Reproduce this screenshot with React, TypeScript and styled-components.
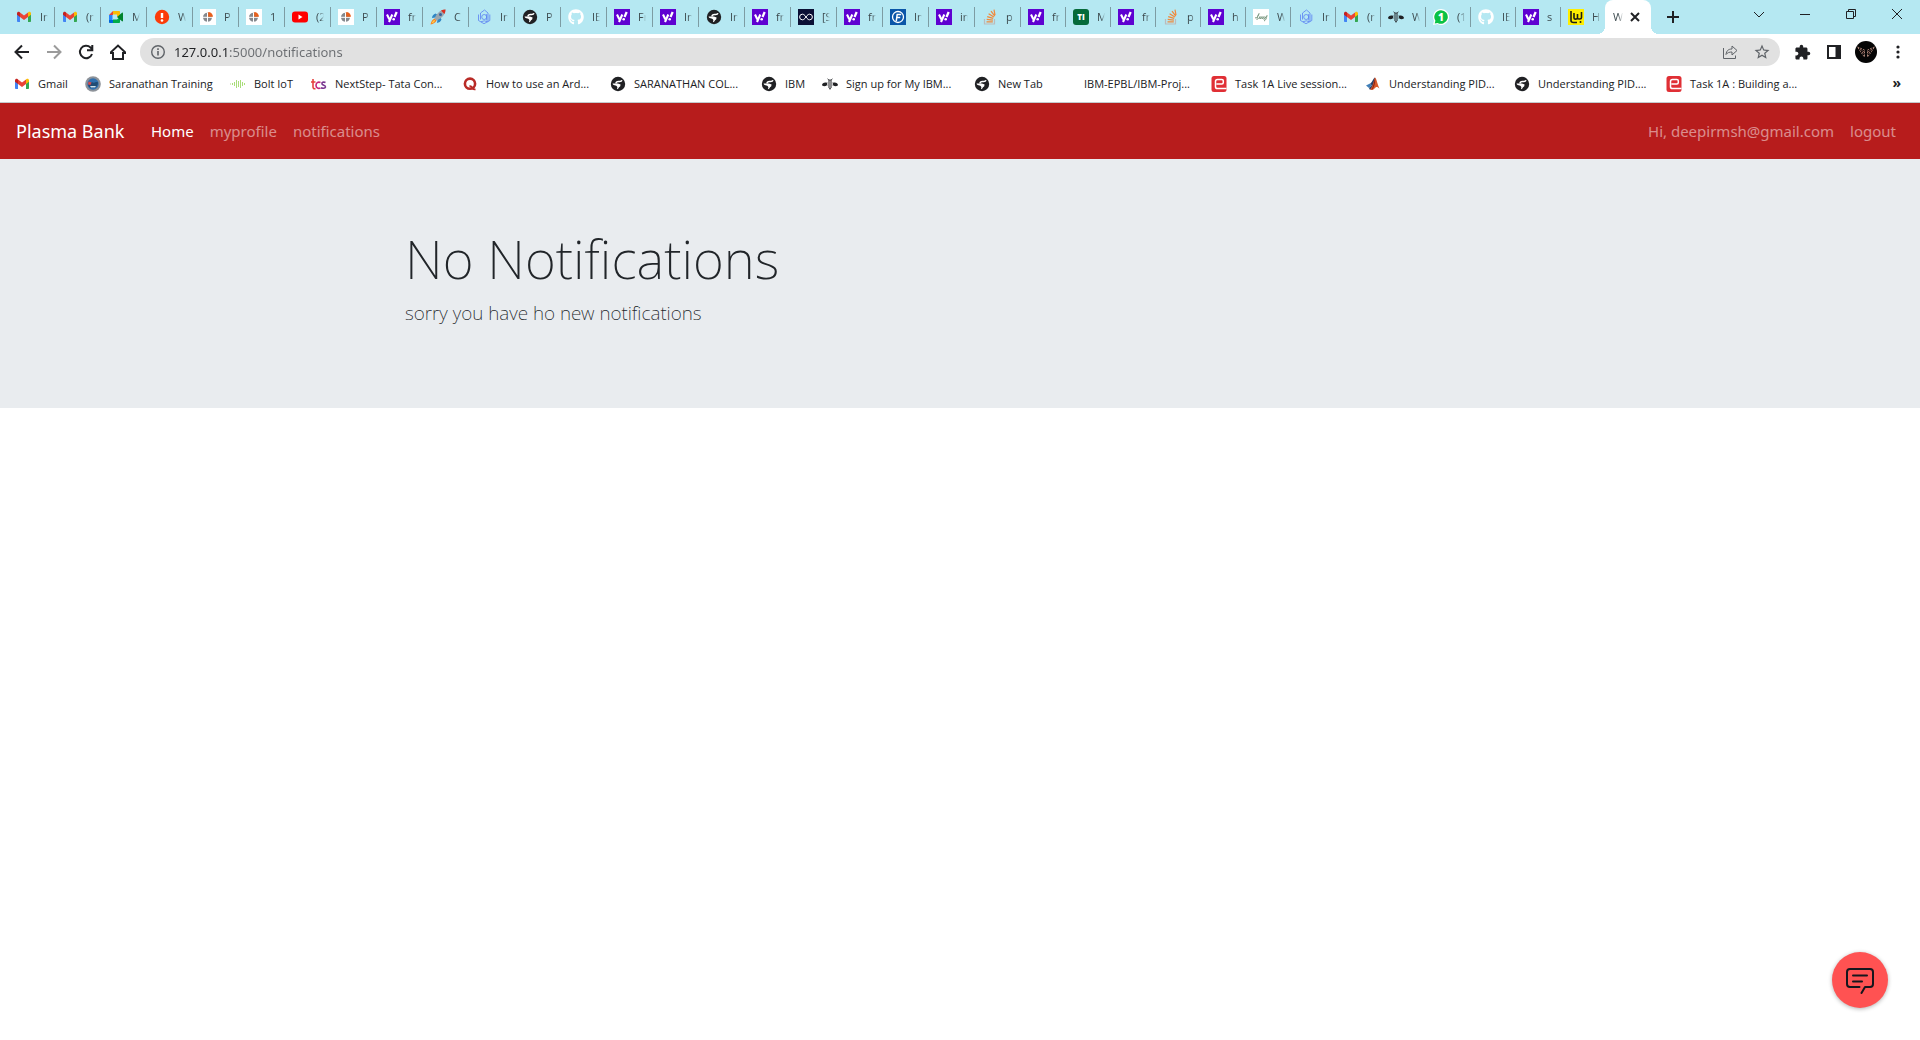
import React from "react";
import styled, { createGlobalStyle, css } from "styled-components";
import { FaGithub } from "react-icons/fa";
import { MdExtension, MdOutlineStarBorder } from "react-icons/md";

type IconKind =
  | "gmail" | "meet" | "alert" | "pie" | "youtube" | "yahoo" | "rocket" | "rasa"
  | "globe" | "github" | "infinity" | "flask" | "stack" | "ti" | "sketch" | "bee"
  | "whatsapp" | "lw" | "crest" | "bolt" | "tcs" | "quora" | "eyantra" | "matlab" | "none";

const GlobalStyle = createGlobalStyle`
  * { box-sizing: border-box; }
  body {
    margin: 0;
    background: #fff;
    color: #212529;
    font-family: "Noto Sans", "Open Sans", sans-serif;
  }
  button { border: 0; padding: 0; background: none; font: inherit; color: inherit; }
  a { color: inherit; text-decoration: none; }
`;

/* ---------- icons ---------- */

const Glyph = styled.svg`
  flex: none;
  display: block;
  width: 16px;
  height: 16px;
`;

const SvgText = styled.text`
  font-family: "Open Sans", sans-serif;
  font-weight: 800;
  text-anchor: middle;
`;

const WhiteGithub = styled(FaGithub)`
  flex: none;
  width: 16px;
  height: 16px;
  color: #fff;
`;

function drawing(kind: IconKind) {
  switch (kind) {
    case "gmail":
      return (
        <>
          <path d="M1 4v8.2c0 .5.4.8.8.8H4V7z" fill="#4285f4" />
          <path d="M12 7v6h2.2c.5 0 .8-.4.8-.8V4z" fill="#34a853" />
          <path d="M12 3.5V8l3-2.3V4.4c0-1.4-1.5-2.1-2.5-1.3z" fill="#fbbc04" />
          <path d="M4 3.5V8L1 5.7V4.4C1 3 2.5 2.3 3.5 3.100z" fill="#c5221f" />
          <path d="M4 8V3.5l4 3 4-3V8l-4 3z" fill="#ea4335" />
        </>
      );
    case "meet":
      return (
        <>
          <path d="M1 6l4-4v4z" fill="#ea4335" />
          <path d="M5 2h6c.6 0 1 .4 1 1v4L9 8V5.500H5z" fill="#fbbc04" />
          <path d="M1 6h3.500v5H1z" fill="#2684fc" />
          <path d="M1 11h4v3H2c-.6 0-1-.4-1-1z" fill="#0066da" />
          <path d="M5 10.500h4L12 8v5c0 .6-.4 1-1 1H5z" fill="#00ac47" />
          <path d="M9 8l5-4.3c.4-.3 1 0 1 .5v7.600c0 .5-.6.8-1 .5z" fill="#00832d" />
        </>
      );
    case "alert":
      return (
        <>
          <circle cx="8" cy="8" r="7.2" fill="#fb3c0a" />
          <path d="M8 4v5" stroke="#fff" strokeWidth="2.4" />
          <circle cx="8" cy="11.5" r="1.3" fill="#fff" />
        </>
      );
    case "pie":
      return (
        <>
          <rect width="16" height="16" fill="#fff" />
          <circle cx="7.500" cy="8.300" r="4.500" fill="#85898e" />
          <path d="M3 8.300h9M7.500 4v9" stroke="#fff" strokeWidth="1" />
          <path d="M8.200 3V7.800h4.800A4.800 4.800 0 0 0 8.200 3z" fill="#e8601c" />
        </>
      );
    case "youtube":
      return (
        <>
          <rect x="0" y="2.5" width="16" height="11" rx="3" fill="#f00" />
          <path d="M6.500 5.500v5l4-2.500z" fill="#fff" />
        </>
      );
    case "yahoo":
      return (
        <>
          <rect width="16" height="16" fill="#5f01d1" />
          <path d="M3 5.500l2.300 4.800M8.300 5.500L5 13" stroke="#fff" strokeWidth="2.100" fill="none" />
          <path d="M12.700 3l-2.200 5" stroke="#fff" strokeWidth="2.300" />
          <circle cx="9.700" cy="10.300" r="1.300" fill="#fff" />
        </>
      );
    case "rocket":
      return (
        <>
          <path d="M5.500 4.500L8 6 5.500 8.500 2 9c0-2 1.500-4 3.500-4.500zM11.500 10.500L10 8 7.500 10.500 7 14c2-.3 4-1.500 4.500-3.500z" fill="#2f86c5" />
          <path d="M15.500.5c-4 0-7 2-9.500 6L4.500 9.500l2 2L9.500 10c4-2.500 6-5.500 6-9.500z" fill="#9aa7b0" />
          <path d="M15.500.5c-1.700 0-3.200.4-4.500 1.100L14.400 5c.7-1.300 1.100-2.800 1.100-4.500z" fill="#dd2e1f" />
          <circle cx="10.5" cy="5.5" r="1.500" fill="#38629a" />
          <path d="M4.500 9.500l2 2c-1 2-3 3.500-6 4 .5-3 2-5 4-6z" fill="#f5801f" />
          <path d="M4.500 11L5 11.500C4.500 13 3 14 1.500 14.500 2 13 3 11.500 4.500 11z" fill="#ffd34d" />
        </>
      );
    case "rasa":
      return (
        <g fill="none" stroke="#5b80f2" strokeWidth=".8">
          <path d="M8.500 1L4.500 4v6.500M8.500 1L12 4v8.500" />
          <circle cx="8.200" cy="8" r="2.500" />
          <path d="M10.700 5v6.500M2.500 5.500v6L8 14.700l5.800-3.200v-6M5 12.800l3.300-1 3.200 1" />
        </g>
      );
    case "globe":
      return (
        <>
          <circle cx="8" cy="8" r="7.200" fill="#202124" />
          <path d="M12 4.300c-.8 1.700-2 1.100-3.500 1.100-1.800 0-2.500.6-2.500 2" fill="none" stroke="#fff" strokeWidth="1.500" />
          <path d="M2.600 7.600h4.600c1.300 0 1.800.8 3.300.6-.2 1.200.2 2.300-1.200 2.800-.8.300-.4 1.600-2.200 2.200-.2-.8.500-1.600.2-2.200-.5-.9-1.500-1.700-2.800-1.700-1 0-1.700-.6-1.900-1.700z" fill="#fff" />
        </>
      );
    case "infinity":
      return (
        <>
          <rect width="16" height="16" fill="#0b1035" />
          <path d="M8 8C6.500 5.800 5.600 5.200 4.400 5.200a2.800 2.800 0 0 0 0 5.600C5.600 10.800 6.500 10.200 8 8s2.400-2.800 3.600-2.800a2.800 2.800 0 0 1 0 5.600C10.400 10.800 9.500 10.200 8 8z" fill="none" stroke="#fff" />
        </>
      );
    case "flask":
      return (
        <>
          <rect width="16" height="16" fill="#0a56a8" />
          <circle cx="8" cy="8" r="5.500" fill="none" stroke="#fff" strokeWidth="1.300" />
          <path d="M6.200 12.300L7.200 5.500h4M6.700 8.500h3.500" fill="none" stroke="#fff" strokeWidth="1.500" />
        </>
      );
    case "stack":
      return (
        <g fill="none">
          <path d="M2.500 10v5h10v-5" stroke="#bcbbbb" strokeWidth="1.200" />
          <path d="M4.500 12.800h6.300M4.700 10.400l6.200.7M5.200 7.600l6 1.700M6.600 4.700l5.300 3.300M9 2.200l3.800 4.900M12 .7l1 5.500" stroke="#f0893b" strokeWidth="1.200" />
        </g>
      );
    case "ti":
      return (
        <>
          <rect width="16" height="16" rx="3" fill="#066a3a" />
          <SvgText x="8" y="11" fontSize="8" fill="#fff">TI</SvgText>
        </>
      );
    case "sketch":
      return (
        <>
          <rect width="16" height="16" fill="#fff" />
          <path d="M2 9c2 0 4-3 4-4.500C5 6 4 9 4 11M5.500 10L7 7.500V10l2-2.500V10l2-2.500v3L14 6.500c-.5 3-1.500 5-3 5.500" fill="none" stroke="#7d9b84" />
        </>
      );
    case "bee":
      return (
        <g stroke="#202124">
          <path d="M0 9C.3 7 2.500 5.800 5 6.800v2.400C3.500 10.500.3 10.500 0 9zM16 9c-.3-2-2.500-3.200-5-2.200v2.400c1.500 1.300 4.700 1.300 5-.2z" fill="#202124" stroke="none" />
          <path d="M5.500 2.800L7 4h2l1.500-1.200" fill="none" strokeWidth=".8" />
          <path d="M6 5h4M5.500 7h5M5.500 9h5M6 11h4M7 12.800h2" strokeWidth="1.100" />
        </g>
      );
    case "whatsapp":
      return (
        <>
          <path d="M8 0a8 8 0 1 1-3.600 15.100L0 16l1-4.200A8 8 0 0 1 8 0z" fill="#fff" />
          <path d="M8 1.200a6.800 6.800 0 1 1-3.400 12.700l-2.900.6.700-2.800A6.800 6.800 0 0 1 8 1.200z" fill="#0ac244" />
          <SvgText x="8" y="11.500" fontSize="10" fill="#fff">1</SvgText>
        </>
      );
    case "lw":
      return (
        <>
          <rect width="16" height="16" fill="#ffee00" />
          <path d="M3 2v9.500c0 1.500 1 2 2.500 2H9M6 4v5c0 1.500 3 1.500 3.500 0V5v4c.5 1.500 4 1.500 4-.5V3" fill="none" stroke="#1f1f14" strokeWidth="1.600" />
          <circle cx="12.500" cy="13" r="1" fill="#1f1f14" />
        </>
      );
    case "crest":
      return (
        <>
          <circle cx="8" cy="8" r="7.800" fill="#8d9299" />
          <circle cx="8" cy="8" r="5.700" fill="#2f6fae" />
          <path d="M3 8.500c2-1 3-3 5-2s3-1.500 5 0c0 3-2 5.500-5 5.500S3.500 11 3 8.500z" fill="#214c74" />
          <path d="M3.500 5.500l3 1-1 2.500-2.500-.5z" fill="#d9484a" />
          <path d="M5 10h6l-1 1.500H6z" fill="#cfe2ee" />
        </>
      );
    case "bolt":
      return (
        <path d="M.5 7.500v1M2.500 7v2M4.500 6v4M6.500 4v8M8.500 5v6M10.500 4v8M12.500 6v4M14.500 7v2" stroke="#a9dd79" strokeWidth="1" />
      );
    case "tcs":
      return (
        <g fill="none" strokeWidth="1.600">
          <path d="M2 3v8c0 1.500 1 2 2.500 1.500M0 6h4.500" stroke="#e6413f" />
          <path d="M9.500 6.500C7 5.500 5 7 5 9.300s2 3.700 4.500 2.700" stroke="#c5247f" />
          <path d="M14.500 6.500c-2-1-4 0-3.500 1.500s4 1 3.500 3c-.5 1.500-3 1.500-4.500.7" stroke="#7a3690" />
        </g>
      );
    case "quora":
      return (
        <>
          <circle cx="8" cy="7.700" r="5.100" fill="none" stroke="#b92b27" strokeWidth="2.600" />
          <path d="M7.500 10c1.500 0 2.500 1 3.200 2.300.6 1 1.500 1.200 2.800 1" fill="none" stroke="#b92b27" strokeWidth="1.800" />
        </>
      );
    case "eyantra":
      return (
        <>
          <rect x=".5" y="0" width="15" height="16" rx="2.500" fill="#e02f35" />
          <path d="M5.500 8h5.300c1 0 1.500-.6 1.500-1.500V4.700c0-.9-.5-1.300-1.500-1.300H6.500c-1.300 0-2 .6-2 2v5.300c0 1.200.7 1.900 2 1.900h9" fill="none" stroke="#fff" strokeWidth="1.500" />
        </>
      );
    case "matlab":
      return (
        <>
          <path d="M1 9.500l4-2 2 2-3 2.500z" fill="#3f7fb8" />
          <path d="M5 7.500c2-.5 3-5 5-6l-1 8-4 4.500L4 12l3-2.500z" fill="#27406b" />
          <path d="M10 1.500c1.500 1 2.500 7 4.500 11-1.500-1.500-2.700-2-3.700-1.200-1 .7-2 2.300-3.300 2.700L5 13.500c2.500-2 3.500-8 5-12z" fill="#d8592a" />
          <path d="M10 1.500c.3 3 .3 7-1.500 10-1 1.500-1.500 2-2.500 2.500 2.500-3 3-8 4-12.500z" fill="#8c2415" />
        </>
      );
    default:
      return null;
  }
}

function Favicon({ kind }: { kind: IconKind }) {
  if (kind === "github") return <WhiteGithub aria-hidden />;
  return <Glyph viewBox="0 0 16 16" aria-hidden>{drawing(kind)}</Glyph>;
}

/* ---------- tab strip ---------- */

const TabStrip = styled.header`
  display: flex;
  height: 34px;
  padding-left: 8px;
  background: #b5e8f2;
`;

const Tabs = styled.div`
  display: flex;
  flex: none;
`;

const Tab = styled.button<{ $narrow?: boolean }>`
  display: flex;
  align-items: center;
  gap: 8px;
  width: ${(p) => (p.$narrow ? 45 : 46)}px;
  padding-left: 8px;

  & + & {
    background: linear-gradient(#7d9ca3, #7d9ca3) left 7px / 1px 20px no-repeat;
  }
`;

const TabLabel = styled.span<{ $active?: boolean }>`
  width: ${(p) => (p.$active ? 10 : 8)}px;
  overflow: hidden;
  font-family: "Open Sans", sans-serif;
  font-size: 11px;
  line-height: 16px;
  text-align: left;
  white-space: nowrap;
  color: #3c4a4e;
  mask-image: linear-gradient(to right, #000 50%, transparent);
`;

const ActiveTab = styled.div`
  position: relative;
  display: flex;
  align-items: center;
  gap: 6px;
  width: 46px;
  padding: 0 10px 0 8px;
  border-radius: 8px 8px 0 0;
  background: #fff;

  &::before,
  &::after {
    content: "";
    position: absolute;
    bottom: 0;
    width: 8px;
    height: 8px;
  }
  &::before {
    right: 100%;
    background: radial-gradient(circle at 0 0, transparent 8px, #fff 8px);
  }
  &::after {
    left: 100%;
    background: radial-gradient(circle at 100% 0, transparent 8px, #fff 8px);
  }
`;

const ActiveTabName = styled.button`
  display: flex;
`;

const IconButton = styled.button<{ $width?: number }>`
  display: flex;
  align-items: center;
  justify-content: center;
  width: ${(p) => p.$width ?? 32}px;
  color: #202124;
`;

const WindowControls = styled.div`
  display: flex;
  height: 28px;
  margin-left: auto;
`;

/* ---------- toolbar ---------- */

const Toolbar = styled.div`
  display: flex;
  align-items: center;
  gap: 6px;
  padding: 4px 6px;
  background: #fff;
`;

const ButtonGroup = styled.div`
  display: flex;
  align-items: center;
`;

const AddressBar = styled.form`
  flex: 1;
  display: flex;
  align-items: center;
  height: 28px;
  padding: 0 2px 0 10px;
  border-radius: 14px;
  background: #e1e1e1;
`;

const SiteInfo = styled.button`
  display: flex;
  margin-right: 8px;
  color: #5f6368;
`;

const AddressInput = styled.input`
  flex: 1;
  min-width: 0;
  padding: 0;
  border: 0;
  outline: 0;
  font: 13px / 20px "Noto Sans", sans-serif;
  color: transparent;
  background: linear-gradient(to right, #202124 54px, #6b6e72 54px);
  background-clip: text;
  -webkit-background-clip: text;
`;

const Avatar = styled.span`
  display: flex;
  width: 22px;
  height: 22px;
  border-radius: 50%;
  background: #050505;
`;

/* ---------- bookmarks ---------- */

const Bookmarks = styled.nav`
  display: flex;
  align-items: center;
  height: 33px;
  padding: 0 19px 4px 14px;
  border-bottom: 1px solid #c4cacc;
  background: #fff;
`;

const Bookmark = styled.a<{ $width: number }>`
  display: flex;
  align-items: center;
  gap: 8px;
  width: ${(p) => p.$width}px;
  font-family: "Open Sans", sans-serif;
  font-size: 11px;
  line-height: 16px;
  color: #202124;
  white-space: nowrap;
`;

const Overflow = styled.button`
  margin-left: auto;
  padding-bottom: 2px;
  font-size: 14px;
  font-weight: 700;
  line-height: 16px;
  color: #202124;
`;

/* ---------- page ---------- */

const Navbar = styled.nav`
  display: flex;
  align-items: center;
  min-height: 56px;
  padding: 8px 16px;
  background: #b71c1c;
`;

const Brand = styled.a`
  min-width: 111px;
  margin-right: 16px;
  font-size: 18px;
  line-height: 30px;
  color: #fff;
`;

const NavLinks = styled.div<{ $end?: boolean }>`
  display: flex;
  ${(p) => p.$end && css`margin-left: auto;`}
`;

const NavLink = styled.a<{ $active?: boolean }>`
  padding: 8px;
  font-size: 15px;
  line-height: 24px;
  color: ${(p) => (p.$active ? "#fff" : "rgba(255, 255, 255, 0.5)")};
`;

const Jumbotron = styled.section`
  padding: 64px 0;
  background: #e9ecef;
`;

const Container = styled.div`
  max-width: 1140px;
  margin: 0 auto;
  padding: 0 15px;
`;

const Title = styled.h1`
  margin: 0 0 4px;
  font-size: 53px;
  font-weight: 200;
  line-height: 71px;
`;

const Lead = styled.p`
  margin: 0 0 16px;
  font-size: 19px;
  font-weight: 200;
  line-height: 30px;
`;

const ChatButton = styled.button`
  position: fixed;
  right: 32px;
  bottom: 32px;
  display: flex;
  align-items: center;
  justify-content: center;
  width: 56px;
  height: 56px;
  border-radius: 50%;
  background: #ff5252;
  box-shadow: 0 1px 4px rgba(0, 0, 0, 0.3);
`;

/* ---------- data ---------- */

const tabs: [IconKind, string][] = [
  ["gmail", "In"], ["gmail", "(n"], ["meet", "M"], ["alert", "W"], ["pie", "P"], ["pie", "1"],
  ["youtube", "(2"], ["pie", "P"], ["yahoo", "fr"], ["rocket", "C"], ["rasa", "In"], ["globe", "P"],
  ["github", "IB"], ["yahoo", "Fr"], ["yahoo", "In"], ["globe", "In"], ["yahoo", "fr"],
  ["infinity", "[S"], ["yahoo", "fr"], ["flask", "In"], ["yahoo", "in"], ["stack", "p"],
  ["yahoo", "fr"], ["ti", "M"], ["yahoo", "fr"], ["stack", "p"], ["yahoo", "h"], ["sketch", "W"],
  ["rasa", "In"], ["gmail", "(n"], ["bee", "W"], ["whatsapp", "(1"], ["github", "IB"],
  ["yahoo", "s"], ["lw", "H"],
];
const WIDE_TABS = 22;

const bookmarks: [IconKind, string, number][] = [
  ["gmail", "Gmail", 71],
  ["crest", "Saranathan Training", 145],
  ["bolt", "Bolt IoT", 81],
  ["tcs", "NextStep- Tata Con...", 151],
  ["quora", "How to use an Ard...", 148],
  ["globe", "SARANATHAN COL...", 151],
  ["globe", "IBM", 61],
  ["bee", "Sign up for My IBM...", 152],
  ["globe", "New Tab", 86],
  ["none", "IBM-EPBL/IBM-Proj...", 151],
  ["eyantra", "Task 1A Live session...", 154],
  ["matlab", "Understanding PID...", 149],
  ["globe", "Understanding PID....", 152],
  ["eyantra", "Task 1A : Building a...", 150],
];

function Line({ d, size = 16, width = 2, color = "currentColor" }: { d: string; size?: number; width?: number; color?: string }) {
  return (
    <svg width={size} height={size} viewBox={`0 0 ${size} ${size}`} fill="none" stroke={color} strokeWidth={width} aria-hidden>
      <path d={d} />
    </svg>
  );
}

function BrowserTabs() {
  return (
    <TabStrip>
      <Tabs role="tablist">
        {tabs.map(([kind, label], i) => (
          <Tab key={i} role="tab" aria-selected={false} $narrow={i >= WIDE_TABS}>
            <Favicon kind={kind} />
            <TabLabel>{label}</TabLabel>
          </Tab>
        ))}
        <ActiveTab>
          <ActiveTabName role="tab" aria-selected><TabLabel $active>W</TabLabel></ActiveTabName>
          <IconButton $width={12} aria-label="Close tab"><Line size={12} d="M2 2l8 8M10 2l-8 8" /></IconButton>
        </ActiveTab>
      </Tabs>
      <IconButton $width={44} aria-label="New tab"><Line size={12} d="M6 0v12M0 6h12" /></IconButton>
      <WindowControls>
        <IconButton $width={46} aria-label="Search tabs"><Line size={12} width={1} d="M1 4l5 5 5-5" /></IconButton>
        <IconButton $width={46} aria-label="Minimize"><Line size={10} width={1} d="M0 5.500h10" /></IconButton>
        <IconButton $width={46} aria-label="Restore"><Line size={10} width={1} d="M.5 2.500h7v7h-7zM2.500 2.500v-2h7v7h-2" /></IconButton>
        <IconButton $width={46} aria-label="Close window"><Line size={10} width={1} d="M0 0l10 10M10 0L0 10" /></IconButton>
      </WindowControls>
    </TabStrip>
  );
}

function BrowserToolbar() {
  return (
    <Toolbar>
      <ButtonGroup>
        <IconButton aria-label="Back"><Line d="M15 8H2M8 1.500L1.500 8 8 14.500" /></IconButton>
        <IconButton aria-label="Forward"><Line color="#9b9b9b" d="M1 8h13M8 1.500L14.500 8 8 14.500" /></IconButton>
        <IconButton aria-label="Reload">
          <Line d="M14 10a6.200 6.200 0 1 1-1.500-6.500L14 5M14.300 1v5.300H9" />
        </IconButton>
        <IconButton aria-label="Home"><Line d="M0 9h3v6h10V9h3L8 1.500z" /></IconButton>
      </ButtonGroup>
      <AddressBar>
        <SiteInfo type="button" aria-label="View site information">
          <svg width="16" height="16" viewBox="0 0 16 16" fill="none" stroke="currentColor" aria-hidden>
            <circle cx="8" cy="8" r="6.300" strokeWidth="1.400" />
            <path d="M8 7v4.500M8 4.300v1.700" strokeWidth="1.600" />
          </svg>
        </SiteInfo>
        <AddressInput aria-label="Address" defaultValue="127.0.0.1:5000/notifications" />
        <IconButton type="button" aria-label="Share">
          <Line color="#5f6368" width={1} d="M1.500 4v10.500h12v-3M4 10.500c.5-4 2.500-5.500 6-5.500V2l5 4.500-5 4.500V8C7.500 8 5.500 8.500 4 10.500z" />
        </IconButton>
        <IconButton type="button" aria-label="Bookmark this page"><MdOutlineStarBorder size={18} color="#5f6368" /></IconButton>
      </AddressBar>
      <ButtonGroup>
        <IconButton aria-label="Extensions"><MdExtension size={17} /></IconButton>
        <IconButton aria-label="Side panel">
          <svg width="14" height="14" viewBox="0 0 14 14" aria-hidden>
            <path d="M1 1h12v12H1z" fill="none" stroke="#202124" strokeWidth="2" />
            <path d="M8.500 0H14v14H8.500z" fill="#202124" />
          </svg>
        </IconButton>
        <IconButton aria-label="Profile">
          <Avatar>
            <svg width="22" height="22" viewBox="0 0 22 22" fill="none" stroke="#a98276" aria-hidden>
              <path d="M2.500 6l7 3v7L6.500 12 2.500 6zM19.500 6l-7 3v7l3-4 4-6z" strokeDasharray="2 1" />
              <path d="M5 8l4 3M17 8l-4 3M7 11l2 2M15 11l-2 2" stroke="#96695f" strokeDasharray="2 1" />
            </svg>
          </Avatar>
        </IconButton>
        <IconButton aria-label="Menu">
          <svg width="4" height="14" viewBox="0 0 4 14" fill="#202124" aria-hidden>
            <circle cx="2" cy="2" r="1.600" /><circle cx="2" cy="7" r="1.600" /><circle cx="2" cy="12" r="1.600" />
          </svg>
        </IconButton>
      </ButtonGroup>
    </Toolbar>
  );
}

export default function App() {
  return (
    <>
      <GlobalStyle />
      <BrowserTabs />
      <BrowserToolbar />
      <Bookmarks aria-label="Bookmarks">
        {bookmarks.map(([kind, label, width]) => (
          <Bookmark key={label} href="#" $width={width}>
            <Favicon kind={kind} />
            {label}
          </Bookmark>
        ))}
        <Overflow aria-label="More bookmarks">»</Overflow>
      </Bookmarks>
      <Navbar>
        <Brand href="#">Plasma Bank</Brand>
        <NavLinks>
          <NavLink href="#" $active>Home</NavLink>
          <NavLink href="#">myprofile</NavLink>
          <NavLink href="#">notifications</NavLink>
        </NavLinks>
        <NavLinks $end>
          <NavLink href="#">Hi, deepirmsh@gmail.com</NavLink>
          <NavLink href="#">logout</NavLink>
        </NavLinks>
      </Navbar>
      <Jumbotron>
        <Container>
          <Title>No Notifications</Title>
          <Lead>sorry you have ho new notifications</Lead>
        </Container>
      </Jumbotron>
      <ChatButton aria-label="Open chat">
        <svg width="28" height="28" viewBox="0 0 28 28" fill="none" stroke="#16161d" strokeWidth="2" strokeLinecap="round" strokeLinejoin="round" aria-hidden>
          <path d="M13.500 21H4a3 3 0 0 1-3-3V6a3 3 0 0 1 3-3h20a3 3 0 0 1 3 3v12a3 3 0 0 1-3 3h-5l-3.500 6" />
          <path d="M7 9.500h14M7 15.500h9" />
        </svg>
      </ChatButton>
    </>
  );
}
